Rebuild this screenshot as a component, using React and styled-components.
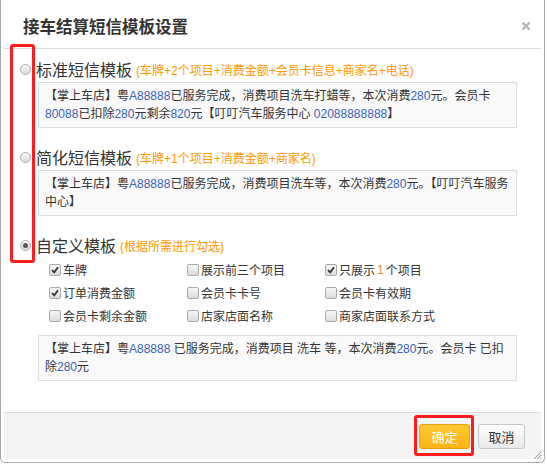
import React from 'react';
import styled, { createGlobalStyle } from 'styled-components';

const GlobalStyle = createGlobalStyle`
  html, body {
    margin: 0;
    padding: 0;
    background: #fff;
  }

  body {
    font-family: "Liberation Sans", "Noto Sans CJK SC", sans-serif;
    color: #333;
  }

  * {
    box-sizing: border-box;
  }
`;

const Dialog = styled.div`
  position: relative;
  display: flex;
  flex-direction: column;
  width: 545px;
  height: 463px;
  padding: 0 3px 3px;
  border: 1px solid #a9a9a9;
  border-top: 0;
  border-radius: 0 0 5px 5px;
  background: #fff;
`;

const Header = styled.div`
  display: flex;
  align-items: center;
  justify-content: space-between;
  height: 49px;
  padding: 4px 10px 0 19px;
  border-bottom: 1px solid #ddd;
`;

const Title = styled.h1`
  margin: 0;
  font-size: 16.5px;
  font-weight: bold;
  color: #333;
`;

const Close = styled.span`
  display: flex;
  width: 10px;
  height: 10px;
`;

const Body = styled.div`
  flex: 1;
  padding: 7px 0 0 16px;
`;

const OptionRow = styled.div`
  display: flex;
  align-items: center;
  gap: 5px;
  height: 26px;
  margin-top: ${(p) => (p.$first ? '0' : '16px')};
`;

const Radio = styled.span`
  position: relative;
  width: 11px;
  height: 11px;
  border: 1px solid #adadad;
  border-radius: 50%;
  background: linear-gradient(#f8f8f8, #dadada);

  &::after {
    content: '';
    display: ${(p) => (p.$checked ? 'block' : 'none')};
    position: absolute;
    left: 2px;
    top: 2px;
    width: 5px;
    height: 5px;
    border-radius: 50%;
    background: #555;
  }
`;

const OptionLabel = styled.span`
  font-size: 16px;
  color: #333;
`;

const Hint = styled.span`
  margin-left: -1px;
  font-size: 12px;
  color: #f90;
`;

const Preview = styled.div`
  width: 479px;
  margin: ${(p) => (p.$gap ? '8px' : '0')} 0 0 18px;
  padding: 4px 2px 4px 6px;
  border: 1px solid #ddd;
  background: #f9f9f9;
  font-size: 12px;
  line-height: 18px;
  color: #333;
`;

const Num = styled.span`
  color: ${(p) => (p.$orange ? '#e8902a' : '#3c64b4')};
`;

const CheckGrid = styled.div`
  display: grid;
  grid-template-columns: repeat(3, 138px);
  grid-auto-rows: 23px;
  align-items: center;
  margin-left: 29px;
`;

const CheckItem = styled.label`
  display: flex;
  align-items: center;
  gap: 2px;
  font-size: 12px;
  color: #333;
`;

const Box = styled.span`
  display: flex;
  align-items: center;
  justify-content: center;
  width: 12px;
  height: 12px;
  border: 1px solid #aaa;
  border-radius: 2px;
  background: linear-gradient(#f7f7f7, #dcdcdc);
`;

const Footer = styled.div`
  display: flex;
  align-items: center;
  justify-content: flex-end;
  gap: 8px;
  height: 47px;
  padding-right: 16px;
  border-top: 1px solid #ddd;
  border-radius: 0 0 4px 4px;
  background: #f4f4f4;
`;

const Button = styled.button`
  height: 25px;
  width: ${(p) => (p.$primary ? '51px' : '47px')};
  padding: 0;
  border: 1px solid ${(p) => (p.$primary ? '#e3a40e' : '#c6c6c6')};
  border-radius: 3px;
  background: ${(p) =>
    p.$primary
      ? 'linear-gradient(#ffc934, #fbb312)'
      : 'linear-gradient(#ffffff, #e8e8e8)'};
  font-family: "Liberation Sans", "Noto Sans CJK SC", sans-serif;
  font-size: 13px;
  color: ${(p) => (p.$primary ? '#fff' : '#333')};
`;

const Highlight = styled.span`
  position: absolute;
  left: ${(p) => p.$x}px;
  top: ${(p) => p.$y}px;
  width: ${(p) => p.$w}px;
  height: ${(p) => p.$h}px;
  border: 3px solid #ff1c1c;
  border-radius: 3px;
  pointer-events: none;
`;

const Grip = styled.svg`
  position: absolute;
  right: 2px;
  bottom: 2px;
`;

const colorize = (text) =>
  text.split(/([A-Z]?\d+)/).map((part, i) =>
    i % 2 ? <Num key={i}>{part}</Num> : part
  );

const Check = ({ checked }) => (
  <Box>
    {checked && (
      <svg width="8" height="8" viewBox="0 0 8 8">
        <path d="M1 4.2 L3.2 6.4 L7 1.2" fill="none" stroke="#333" strokeWidth="1.8" />
      </svg>
    )}
  </Box>
);

const fields = [
  { label: '车牌', checked: true },
  { label: '展示前三个项目' },
  { label: <>只展示<Num $orange>1</Num>个项目</>, checked: true },
  { label: '订单消费金额', checked: true },
  { label: '会员卡卡号' },
  { label: '会员卡有效期' },
  { label: '会员卡剩余金额' },
  { label: '店家店面名称' },
  { label: '商家店面联系方式' },
];

export default function App() {
  return (
    <>
      <GlobalStyle />
      <Dialog>
        <Header>
          <Title>接车结算短信模板设置</Title>
          <Close>
            <svg width="10" height="10" viewBox="0 0 10 10">
              <path d="M1.5 1.5 L8.5 8.5 M8.5 1.5 L1.5 8.5" stroke="#b5b5b5" strokeWidth="2.4" />
            </svg>
          </Close>
        </Header>

        <Body>
          <OptionRow $first>
            <Radio />
            <OptionLabel>标准短信模板</OptionLabel>
            <Hint>(车牌+2个项目+消费金额+会员卡信息+商家名+电话)</Hint>
          </OptionRow>
          <Preview>
            {colorize('【掌上车店】粤A88888已服务完成，消费项目洗车打蜡等，本次消费280元。会员卡80088已扣除280元剩余820元【叮叮汽车服务中心 02088888888】')}
          </Preview>

          <OptionRow>
            <Radio />
            <OptionLabel>简化短信模板</OptionLabel>
            <Hint>(车牌+1个项目+消费金额+商家名)</Hint>
          </OptionRow>
          <Preview>
            {colorize('【掌上车店】粤A88888已服务完成，消费项目洗车等，本次消费280元。【叮叮汽车服务中心】')}
          </Preview>

          <OptionRow>
            <Radio $checked />
            <OptionLabel>自定义模板</OptionLabel>
            <Hint>(根据所需进行勾选)</Hint>
          </OptionRow>
          <CheckGrid>
            {fields.map((f, i) => (
              <CheckItem key={i}>
                <Check checked={f.checked} />
                {f.label}
              </CheckItem>
            ))}
          </CheckGrid>
          <Preview $gap>
            {colorize('【掌上车店】粤A88888 已服务完成，消费项目 洗车 等，本次消费280元。会员卡 已扣除280元')}
          </Preview>
        </Body>

        <Footer>
          <Button $primary>确定</Button>
          <Button>取消</Button>
        </Footer>

        <Highlight $x={9} $y={44} $w={25} $h={219} />
        <Highlight $x={413} $y={415} $w={60} $h={41} />

        <Grip width="10" height="10" viewBox="0 0 10 10">
          <path d="M9 2 L2 9 M9 5 L5 9 M9 8 L8 9" stroke="#999" strokeWidth="1" />
        </Grip>
      </Dialog>
    </>
  );
}
